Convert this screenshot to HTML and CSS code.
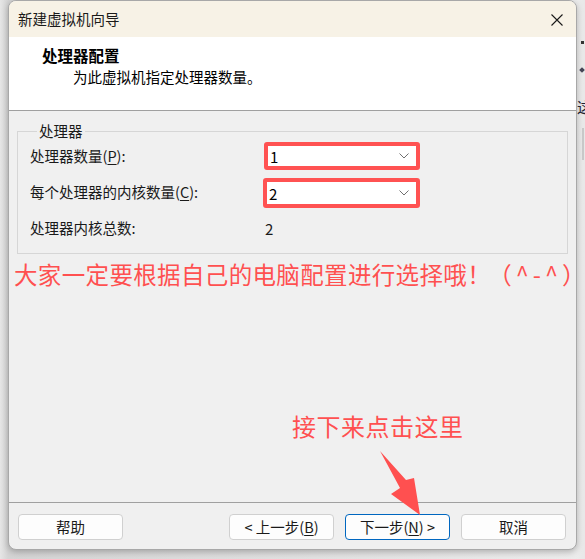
FILE: index.html
```html
<!DOCTYPE html>
<html lang="zh-CN">
<head>
<meta charset="utf-8">
<title>新建虚拟机向导</title>
<link rel="stylesheet" href="styles.css">
</head>
<body>
<div class="desk">
  <div class="win">
    <div class="titlebar">
      <span class="title">新建虚拟机向导</span>
      <svg class="close" width="12" height="12" viewBox="0 0 12 12"><path d="M0.5 0.5 L11.5 11.5 M11.5 0.5 L0.5 11.5" stroke="#1a1a1a" stroke-width="1.1" fill="none"/></svg>
    </div>
    <div class="header">
      <div class="h-title">处理器配置</div>
      <div class="h-sub">为此虚拟机指定处理器数量。</div>
    </div>
    <div class="body">
      <fieldset class="group">
        <legend>处理器</legend>
        <div class="rows">
          <div class="lbl">处理器数量(<u>P</u>):</div>
          <div class="mark">
            <div class="combo"><span>1</span><svg width="10" height="6" viewBox="0 0 10 6"><path d="M0.5 0.5 L5 5 L9.5 0.5" stroke="#707070" fill="none"/></svg></div>
          </div>
          <div class="lbl">每个处理器的内核数量(<u>C</u>):</div>
          <div class="mark mark2">
            <div class="combo"><span>2</span><svg width="10" height="6" viewBox="0 0 10 6"><path d="M0.5 0.5 L5 5 L9.5 0.5" stroke="#707070" fill="none"/></svg></div>
          </div>
          <div class="lbl">处理器内核总数:</div>
          <div class="val">2</div>
        </div>
      </fieldset>
      <div class="note">大家一定要根据自己的电脑配置进行选择哦！<span class="emo">（<span class="face">^<span class="dash">-</span>^</span>）</span></div>
      <div class="hint">接下来点击这里</div>
      <svg class="arrow" width="50" height="70" viewBox="0 0 50 70"><polygon points="1,0 27,29 35,27 41,64 12,43 21,37" fill="#ff5050"/></svg>
    </div>
    <div class="footer">
      <button class="btn">帮助</button>
      <div class="spacer"></div>
      <button class="btn">&lt;&nbsp;上一步(<u>B</u>)</button>
      <button class="btn def">下一步(<u>N</u>)&nbsp;&gt;</button>
      <button class="btn">取消</button>
    </div>
  </div>
  <div class="bgbits">
    <span class="dot"></span>
    <span class="dia"></span>
    <span class="ch">这</span>
    <span class="bar"></span>
  </div>
</div>
</body>
</html>
```

FILE: styles.css
```css
* { box-sizing: border-box; }
html, body { margin: 0; padding: 0; }
body {
  width: 585px;
  height: 559px;
  overflow: hidden;
  background: #e3e3e3;
  font-family: "Noto Sans CJK SC", "Noto Sans", sans-serif;
  color: #1a1a1a;
}
.desk {
  position: relative;
  width: 585px;
  height: 559px;
  padding-left: 8px;
  background: linear-gradient(to right, #e6e6e6 0, #d4d4d4 8px, #ececec 576px, #e8e8e8 585px);
}
.win {
  position: relative;
  width: 569px;
  height: 550px;
  border: 1px solid #a8a8a8;
  border-radius: 8px;
  overflow: hidden;
  display: flex;
  flex-direction: column;
  background: #f0f0f0;
  box-shadow: 0 2px 6px rgba(0,0,0,0.25);
}
.titlebar {
  height: 36px;
  flex: none;
  background: #f7f2e6;
  display: flex;
  align-items: center;
  justify-content: space-between;
  padding: 0 13px 0 9px;
}
.title { font-size: 14.5px; line-height: 36px; color: #1a1a1a; }
.close { display: block; margin-top: 1px; }
.header {
  height: 74px;
  flex: none;
  background: #ffffff;
  border-bottom: 1px solid #a0a0a0;
  padding: 8px 0 0 33px;
}
.h-title { font-size: 15.5px; line-height: 20px; font-weight: 700; color: #000; }
.h-sub { font-size: 14.5px; line-height: 20px; margin-top: 2px; padding-left: 31px; color: #000; }
.body {
  position: relative;
  flex: 1;
  padding: 12px 8px 0 8px;
}
.group {
  margin: 0;
  padding: 0 0 7px 12px;
  border: 1px solid #d6d6d6;
  min-width: 0;
}
.group legend {
  font-size: 14.5px;
  line-height: 16px;
  padding: 0 2px;
  margin-left: 7px;
  color: #1a1a1a;
}
.rows {
  display: grid;
  grid-template-columns: 234px 156px;
  grid-auto-rows: 36px;
  align-items: center;
  margin-top: -1px;
}
.lbl { font-size: 14.5px; line-height: 20px; color: #1a1a1a; }
.lbl u, .btn u { text-decoration-thickness: 1px; text-underline-offset: 2px; }
.mark {
  height: 28px;
  border: 4px solid #ff5252;
  border-radius: 3px;
  background: #ffffff;
}
.mark2 { height: 30px; margin-left: -1px; margin-top: 2px; }
.combo {
  height: 100%;
  display: flex;
  align-items: center;
  justify-content: space-between;
  padding: 0 7px 0 2px;
  font-size: 15px;
  color: #000;
}
.combo svg { display: block; }
.val { font-size: 15px; padding-left: 1px; color: #1a1a1a; }
.note {
  font-size: 23.5px;
  line-height: 30px;
  color: #ff5050;
  margin: 5px 0 0 -3px;
  white-space: nowrap;
  letter-spacing: 0.35px;
}
.emo {
  margin-left: 9px;
  letter-spacing: 0;
  font-feature-settings: "halt" 1;
}
.face { margin: 0 4px; }
.dash { margin: 0 4px; }
.hint {
  font-size: 24px;
  line-height: 30px;
  color: #ff5050;
  margin-top: 122px;
  padding-left: 275px;
  letter-spacing: 0.5px;
}
.arrow {
  position: absolute;
  left: 370px;
  top: 340px;
}
.footer {
  height: 47px;
  flex: none;
  border-top: 1px solid #a0a0a0;
  display: flex;
  align-items: flex-start;
  gap: 11px;
  padding: 11px 10px 0 9px;
}
.spacer { flex: 1; }
.btn {
  width: 105px;
  height: 26px;
  background: #fdfdfd;
  border: 1px solid #d0d0d0;
  border-radius: 4px;
  font-family: "Noto Sans CJK SC", "Noto Sans", sans-serif;
  font-size: 14.5px;
  line-height: 22px;
  color: #1a1a1a;
  padding: 0;
}
.btn.def { border-color: #0067c0; }
.bgbits span { position: absolute; }
.dot { left: 581px; top: 41px; width: 3px; height: 3px; background: #333; }
.dia { left: 580px; top: 68px; width: 4px; height: 4px; background: #445; transform: rotate(45deg); }
.ch { left: 577px; top: 98px; font-size: 15px; line-height: 18px; color: #223; }
.bar { left: 582px; top: 128px; width: 2px; height: 32px; background: #c8c8c8; }
```
